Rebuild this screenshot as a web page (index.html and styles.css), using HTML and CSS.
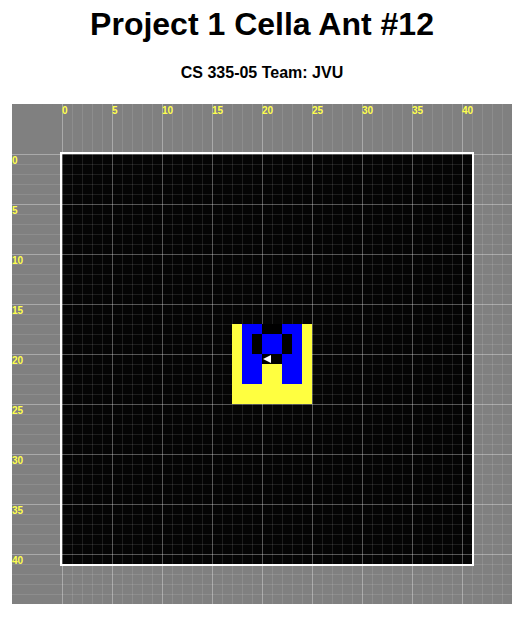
FILE: index.html
```html
<!DOCTYPE html>
<html>
<head>
<meta charset="utf-8">
<title>Project 1 Cella Ant #12</title>
<link rel="stylesheet" href="styles.css">
</head>
<body>
<h1 class="title">Project 1 Cella Ant #12</h1>
<h4 class="subtitle">CS 335-05 Team: JVU</h4>
<div class="canvas">
  <div class="corner"></div>
  <div class="ruler-top">
    <span>0</span><span>5</span><span>10</span><span>15</span><span>20</span><span>25</span><span>30</span><span>35</span><span>40</span>
  </div>
  <div class="ruler-left">
    <span>0</span><span>5</span><span>10</span><span>15</span><span>20</span><span>25</span><span>30</span><span>35</span><span>40</span>
  </div>
  <div class="field">
    <div class="board">
      <div class="ant-block">
        <div class="c y"></div><div class="c b"></div><div class="c b"></div><div class="c k"></div><div class="c k"></div><div class="c b"></div><div class="c b"></div><div class="c y"></div>
        <div class="c y"></div><div class="c b"></div><div class="c k"></div><div class="c b"></div><div class="c b"></div><div class="c k"></div><div class="c b"></div><div class="c y"></div>
        <div class="c y"></div><div class="c b"></div><div class="c k"></div><div class="c b"></div><div class="c b"></div><div class="c k"></div><div class="c b"></div><div class="c y"></div>
        <div class="c y"></div><div class="c b"></div><div class="c b"></div><div class="c k ant"><svg width="10" height="10" viewBox="0 0 10 10"><polygon points="1,5 9,1 9,9" fill="#fff"/></svg></div><div class="c k"></div><div class="c b"></div><div class="c b"></div><div class="c y"></div>
        <div class="c y"></div><div class="c b"></div><div class="c b"></div><div class="c y"></div><div class="c y"></div><div class="c b"></div><div class="c b"></div><div class="c y"></div>
        <div class="c y"></div><div class="c b"></div><div class="c b"></div><div class="c y"></div><div class="c y"></div><div class="c b"></div><div class="c b"></div><div class="c y"></div>
        <div class="c y"></div><div class="c y"></div><div class="c y"></div><div class="c y"></div><div class="c y"></div><div class="c y"></div><div class="c y"></div><div class="c y"></div>
        <div class="c y"></div><div class="c y"></div><div class="c y"></div><div class="c y"></div><div class="c y"></div><div class="c y"></div><div class="c y"></div><div class="c y"></div>
      </div>
    </div>
  </div>
</div>
</body>
</html>
```

FILE: styles.css
```css
body {
  margin: 0;
  padding-top: 6px;
  background: #fff;
  color: #000;
  font-family: "Liberation Sans", Arial, sans-serif;
}

.title {
  margin: 0;
  font-size: 32px;
  line-height: 37px;
  font-weight: bold;
  text-align: center;
}

.subtitle {
  margin: 21px 0 0;
  font-size: 16px;
  line-height: 18px;
  font-weight: bold;
  text-align: center;
}

.canvas {
  --minor: rgba(255, 255, 255, 0.1);
  --major: rgba(255, 255, 255, 0.25);
  width: 500px;
  height: 500px;
  margin: 22px auto 0;
  display: grid;
  grid-template-columns: 50px 450px;
  grid-template-rows: 50px 450px;
  background: #808080;
}

.ruler-top {
  display: flex;
  background-image:
    linear-gradient(to right, var(--major) 1px, transparent 1px),
    linear-gradient(to right, var(--minor) 1px, transparent 1px);
  background-size: 50px 100%, 10px 100%;
}

.ruler-left {
  display: flex;
  flex-direction: column;
  background-image:
    linear-gradient(to bottom, var(--major) 1px, transparent 1px),
    linear-gradient(to bottom, var(--minor) 1px, transparent 1px);
  background-size: 100% 50px, 100% 10px;
}

.ruler-top span,
.ruler-left span {
  font-size: 10px;
  line-height: 13px;
  font-weight: bold;
  color: #ffff4d;
}

.ruler-top span {
  flex: 0 0 50px;
}

.ruler-left span {
  flex: 0 0 50px;
}

.field {
  background-image:
    linear-gradient(to right, var(--major) 1px, transparent 1px),
    linear-gradient(to bottom, var(--major) 1px, transparent 1px),
    linear-gradient(to right, var(--minor) 1px, transparent 1px),
    linear-gradient(to bottom, var(--minor) 1px, transparent 1px);
  background-size: 50px 100%, 100% 50px, 10px 100%, 100% 10px;
}

.board {
  width: 410px;
  height: 410px;
  margin: -2px 0 0 -2px;
  border: 2px solid #fff;
  background-color: #050505;
  background-image:
    linear-gradient(to right, var(--major) 1px, transparent 1px),
    linear-gradient(to bottom, var(--major) 1px, transparent 1px),
    linear-gradient(to right, var(--minor) 1px, transparent 1px),
    linear-gradient(to bottom, var(--minor) 1px, transparent 1px);
  background-size: 50px 100%, 100% 50px, 10px 100%, 100% 10px;
  display: grid;
  grid-template-columns: repeat(41, 10px);
  grid-template-rows: repeat(41, 10px);
}

.ant-block {
  grid-column: 18 / span 8;
  grid-row: 18 / span 8;
  display: grid;
  grid-template-columns: repeat(8, 10px);
  grid-template-rows: repeat(8, 10px);
}

.c {
  width: 10px;
  height: 10px;
}

.c svg {
  display: block;
}

.y { background: #ffff40; }
.b { background: #0000ff; }
.k { background: #000; }
```
